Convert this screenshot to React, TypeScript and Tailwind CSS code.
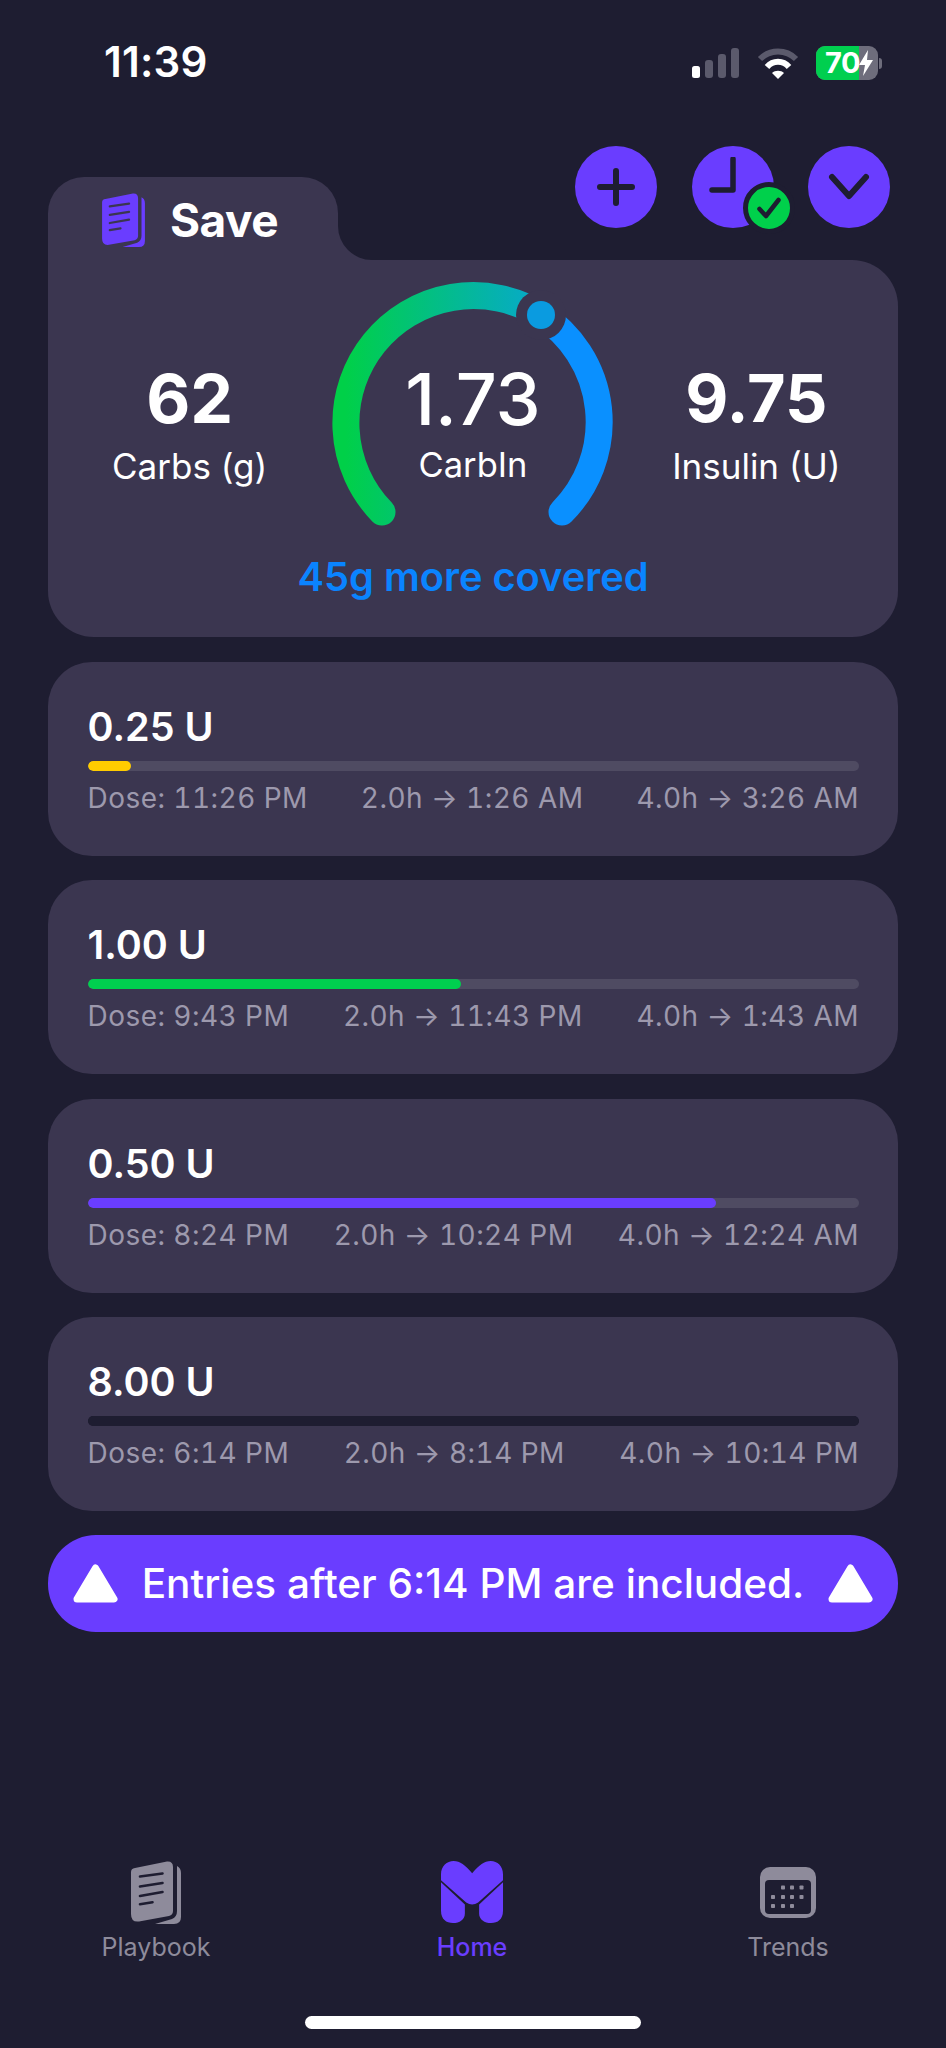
import React from "react";

function DocIcon({ body, back, line, className }: { body: string; back: string; line: string; className: string }) {
  return (
    <svg viewBox="0 0 50 63" className={className}>
      <path d="M46 5 Q50 7 50 12 L50 56 Q50 63 43 63 L24 63 L41 58 Q46 56 46 50 Z" fill={back} />
      <path d="M4 7 L36 .5 Q42 0 42 6 L42 50 Q42 54 38 55 L8 60.5 Q0 61.5 0 53 L0 11 Q0 7.5 4 7 Z" fill={body} />
      <g stroke={line} strokeWidth="2.6" strokeLinecap="round" fill="none">
        <path d="M9 15.5 L31.5 12.5" />
        <path d="M9 25.5 L31.5 22" />
        <path d="M9 35 L31.5 31" />
        <path d="M9 43.3 L21.5 41.3" />
      </g>
    </svg>
  );
}

function Warn() {
  return (
    <svg viewBox="0 0 45 39" className="w-[45px] h-[39px] shrink-0">
      <path d="M22.5 4 L41 35 L4 35 Z" fill="#fff" stroke="#fff" strokeWidth="7" strokeLinejoin="round" />
    </svg>
  );
}

function Round({ children }: { children: React.ReactNode }) {
  return <div className="relative w-[82px] h-[82px] rounded-full bg-[#6a3dff] flex items-center justify-center">{children}</div>;
}

const doses = [
  { u: "0.25 U", bar: "w-[43px] bg-[#ffcc00]", track: "bg-[#4f4b62]", a: "Dose: 11:26 PM", b: "2.0h → 1:26 AM", c: "4.0h → 3:26 AM" },
  { u: "1.00 U", bar: "w-[373px] bg-[#00cf4f]", track: "bg-[#4f4b62]", a: "Dose: 9:43 PM", b: "2.0h → 11:43 PM", c: "4.0h → 1:43 AM" },
  { u: "0.50 U", bar: "w-[628px] bg-[#6a3dff]", track: "bg-[#4f4b62]", a: "Dose: 8:24 PM", b: "2.0h → 10:24 PM", c: "4.0h → 12:24 AM" },
  { u: "8.00 U", bar: "w-full bg-[#1e1d31]", track: "bg-[#1e1d31]", a: "Dose: 6:14 PM", b: "2.0h → 8:14 PM", c: "4.0h → 10:14 PM" },
];

export default function App() {
  return (
    <div className="w-[946px] h-[2048px] bg-[#1e1d31] flex flex-col overflow-hidden font-[Inter,sans-serif] text-white">
      {/* status bar */}
      <div className="h-[146px] shrink-0 flex items-start justify-between pt-[38px] pl-[104px] pr-[64px]">
        <span className="text-[42px] leading-[48px] font-semibold tracking-[0.2px]">11:39</span>
        <div className="flex items-center gap-[17px] pt-[8px]">
          <svg viewBox="0 0 48 30" className="w-[48px] h-[30px]">
            <rect x="0" y="18" width="8" height="12" rx="2.5" fill="#fff" />
            <rect x="13" y="12" width="8" height="18" rx="3" fill="#5b5a6c" />
            <rect x="26" y="6" width="8" height="24" rx="3" fill="#5b5a6c" />
            <rect x="39" y="0" width="8" height="30" rx="3" fill="#5b5a6c" />
          </svg>
          <svg viewBox="0 0 42 32" className="w-[42px] h-[32px]">
            <path d="M3 12 C13 2 29 2 39 12" stroke="#5b5a6c" strokeWidth="6" fill="none" />
            <path d="M10 20 C16 13 26 13 32 20" stroke="#fff" strokeWidth="6" fill="none" />
            <path d="M15 26 C18 23 24 23 27 26 L21 32 Z" fill="#fff" />
          </svg>
          <div className="flex items-center gap-[1px]">
            <div className="relative w-[62px] h-[34px] rounded-[9px] overflow-hidden bg-[#6e6d7c]">
              <div className="w-[43px] h-full bg-[#00cf4f]" />
              <span className="absolute left-[9px] top-0 text-[29px] leading-[34px] font-bold tracking-[-0.5px]">70</span>
              <svg viewBox="0 0 14 26" className="absolute left-[43px] top-[4px] w-[14px] h-[26px]">
                <path d="M9 0 L0 15 L6 15 L4 26 L14 10 L8 10 Z" fill="#fff" />
              </svg>
            </div>
            <div className="w-[3px] h-[11px] rounded-r-[3px] bg-[#6e6d7c]" />
          </div>
        </div>
      </div>

      <div className="ml-[48px] w-[850px] flex flex-col">
        {/* header */}
        <div className="h-[114px] flex justify-between">
          <div className="relative self-end w-[290px] h-[83px] bg-[#3b3650] rounded-t-[36px] flex items-center pl-[54px] pt-[2px] gap-[25px]">
            <DocIcon body="#6a3dff" back="#6a3dff" line="#3b3650" className="w-[43px] h-[54px]" />
            <span className="text-[46px] leading-[52px] font-bold tracking-[-0.5px]">Save</span>
            <div className="absolute left-full bottom-0 w-[34px] h-[34px] bg-[#3b3650]">
              <div className="w-full h-full bg-[#1e1d31] rounded-bl-[34px]" />
            </div>
          </div>
          <div className="flex self-start gap-[34.5px] mr-[8px]">
            <Round>
              <svg viewBox="0 0 40 40" className="w-[40px] h-[40px]">
                <path d="M20 4 V36 M4 20 H36" stroke="#1e1d31" strokeWidth="6" strokeLinecap="round" />
              </svg>
            </Round>
            <Round>
              <svg viewBox="0 0 60 60" className="w-[60px] h-[60px]">
                <path d="M30 2 V33 H9" stroke="#1e1d31" strokeWidth="5.5" strokeLinecap="round" strokeLinejoin="round" fill="none" />
              </svg>
              <div className="absolute left-[51px] top-[36px] w-[52px] h-[52px] rounded-full bg-[#00d04b] border-[5px] border-[#1e1d31] flex items-center justify-center">
                <svg viewBox="0 0 24 22" className="w-[24px] h-[22px]">
                  <path d="M2.5 12 L9 19 L21.5 3" stroke="#1e1d31" strokeWidth="4.5" strokeLinecap="round" strokeLinejoin="round" fill="none" />
                </svg>
              </div>
            </Round>
            <Round>
              <svg viewBox="0 0 44 28" className="w-[44px] h-[28px]">
                <path d="M5 4 L22 23 L39 4" stroke="#1e1d31" strokeWidth="6" strokeLinecap="round" strokeLinejoin="round" fill="none" />
              </svg>
            </Round>
          </div>
        </div>

        {/* main card */}
        <div className="h-[377px] bg-[#3b3650] rounded-b-[46px] rounded-tr-[46px] pt-[21px] flex flex-col items-center">
          <div className="w-full grid grid-cols-3 h-[251px]">
            <div className="flex flex-col items-center pt-[83px]">
              <span className="text-[68px] leading-[68px] font-bold">62</span>
              <span className="text-[35px] leading-[44px] mt-[12px] font-normal">Carbs (g)</span>
            </div>
            <div className="relative flex flex-col items-center pt-[84px]">
              <svg viewBox="0 0 282 250" className="absolute left-0 top-0 w-[282px] h-[250px]">
                <defs>
                  <linearGradient id="g" gradientUnits="userSpaceOnUse" x1="14" y1="0" x2="215" y2="0">
                    <stop offset="0" stopColor="#00d048" />
                    <stop offset="1" stopColor="#07a8d0" />
                  </linearGradient>
                </defs>
                <path d="M51 231 A127.5 127.5 0 0 1 210 34" stroke="url(#g)" strokeWidth="27" strokeLinecap="round" fill="none" />
                <path d="M210 34 A127.5 127.5 0 0 1 231 231" stroke="#0a90ff" strokeWidth="27" strokeLinecap="round" fill="none" />
                <circle cx="210" cy="34" r="25" fill="#3b3650" />
                <circle cx="210" cy="34" r="14" fill="#0a9be0" />
              </svg>
              <span className="relative text-[72px] leading-[68px] font-medium">1.73</span>
              <span className="relative text-[34.5px] leading-[44px] mt-[10px] font-normal">CarbIn</span>
            </div>
            <div className="flex flex-col items-center pt-[83px]">
              <span className="text-[66.5px] leading-[68px] font-bold">9.75</span>
              <span className="text-[35px] leading-[44px] mt-[12px] font-normal">Insulin (U)</span>
            </div>
          </div>
          <div className="mt-[20px] text-[39.8px] leading-[50px] font-semibold text-[#0a84ff]">45g more covered</div>
        </div>

        {/* doses */}
        <div className="mt-[25px] flex flex-col gap-[24.4px]">
          {doses.map((d) => (
            <div key={d.u} className="h-[194px] bg-[#3b3650] rounded-[44px] pt-[44px] pl-[39.5px] pr-[39px]">
              <div className="text-[39.5px] leading-[42px] font-semibold">{d.u}</div>
              <div className={`mt-[13px] h-[10px] rounded-full overflow-hidden ${d.track}`}>
                <div className={`h-full rounded-full ${d.bar}`} />
              </div>
              <div className="mt-[10px] flex justify-between text-[28px] leading-[34px] text-[#9d99ad] tracking-[0.45px] tabular-nums">
                <span>{d.a}</span>
                <span>{d.b}</span>
                <span>{d.c}</span>
              </div>
            </div>
          ))}
        </div>

        {/* banner */}
        <div className="mt-[24px] h-[97px] rounded-[48px] bg-[#6a3dff] flex items-center justify-between px-[25px]">
          <Warn />
          <span className="text-[40.5px] leading-[48px] font-medium">Entries after 6:14 PM are included.</span>
          <Warn />
        </div>
      </div>

      {/* tab bar */}
      <div className="mt-auto flex pl-[56px] gap-[116px]">
        <div className="w-[200px] flex flex-col items-center text-[#8e8b9b]">
          <div className="h-[64px] flex items-center">
            <DocIcon body="#8e8b9b" back="#8e8b9b" line="#1e1d31" className="w-[50px] h-[63px]" />
          </div>
          <span className="mt-[8px] text-[25px] leading-[30px]">Playbook</span>
        </div>
        <div className="w-[200px] flex flex-col items-center text-[#6a3dff]">
          <div className="h-[64px] flex items-center">
            <svg viewBox="0 0 187 187" className="w-[62px] h-[62px]" fill="#6a3dff">
              <path d="M0 40 C0 15 18 0 38 0 C58 0 72 12 94 37 C116 12 130 0 150 0 C170 0 187 15 187 40 L187 58 L112 125 Q94 138 76 125 L0 58 Z" />
              <path d="M0 64 L72 131 L72 158 C72 176 56 187 36 187 C16 187 0 176 0 150 Z" />
              <path d="M187 64 L115 131 L115 158 C115 176 131 187 151 187 C171 187 187 176 187 150 Z" />
            </svg>
          </div>
          <span className="mt-[8px] text-[25px] leading-[30px] font-medium">Home</span>
        </div>
        <div className="w-[200px] flex flex-col items-center text-[#8e8b9b]">
          <div className="h-[64px] flex items-center">
            <svg viewBox="0 0 56 51" className="w-[56px] h-[51px]">
              <rect width="56" height="51" rx="10" fill="#8e8b9b" />
              <rect x="5" y="13" width="46" height="34" rx="4" fill="#1e1d31" />
              <g fill="#8e8b9b">
                {[[23, 18.5], [32, 18.5], [41.5, 18.5], [13, 28], [23, 28], [32, 28], [41.5, 28], [13, 37], [23, 37], [32, 37]].map(([x, y]) => (
                  <rect key={`${x}-${y}`} x={x - 2} y={y} width="4" height="4" rx="0.8" />
                ))}
              </g>
            </svg>
          </div>
          <span className="mt-[8px] text-[25px] leading-[30px]">Trends</span>
        </div>
      </div>

      {/* home indicator */}
      <div className="mt-[54px] mb-[19px] mx-auto w-[336px] h-[13px] rounded-full bg-white" />
    </div>
  );
}
